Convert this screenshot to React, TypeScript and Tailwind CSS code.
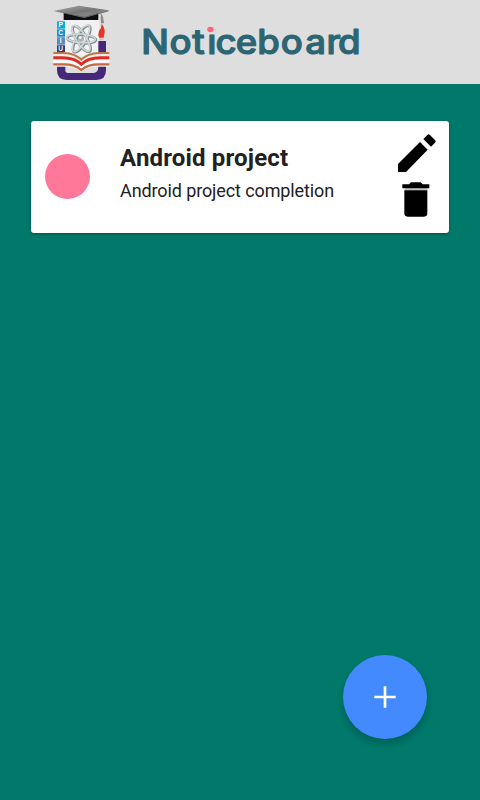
import React from "react";

function CollegeLogo() {
  return (
    <svg className="h-[84px] w-[75px] shrink-0" viewBox="0 0 225 252" aria-hidden="true">
      <defs>
        <linearGradient id="cap" x1="0" x2="1" y1="0" y2="1">
          <stop offset="0" stopColor="#aaa" />
          <stop offset="0.5" stopColor="#777" />
          <stop offset="1" stopColor="#999" />
        </linearGradient>
      </defs>
      <rect x="57" y="56" width="106" height="114" fill="#f1f1f2" />
      <path
        d="M160 123h23v88q0 29-29 29H65q-29 0-29-29v-19h25v19q0 8 8 8h73q18 0 18-18z"
        fill="#452879"
      />
      <path d="M56 38v22h104V38z" fill="#0c0d10" />
      <path d="M26 33 102 17 191 31 118 52z" fill="url(#cap)" />
      <path d="M26 33 118 50 191 31v3l-73 20z" fill="#66676a" />
      <path d="M106 33q47 1 64 10l1 17" fill="none" stroke="#707174" strokeWidth="2" />
      <path d="M168 45q6 0 6 5l3 20h-9l-1-17z" fill="#8b8b8e" />
      <path d="M170 71q10 13 9 25l-3 17-13 1q-6-9 0-23 7-7 7-20z" fill="#e33528" />
      <path d="M163 113h13l-2 8h-10z" fill="#e7b6ad" />
      <g fontFamily="Liberation Sans, sans-serif" fontSize="20" fontWeight="700" fill="white" textAnchor="middle">
        <rect x="36" y="64" width="24" height="22" fill="#0aabe0" />
        <text x="47" y="82">P</text>
        <rect x="36" y="88" width="24" height="22" fill="#138fd0" />
        <text x="47" y="106">C</text>
        <rect x="36" y="112" width="24" height="22" fill="#6585b8" />
        <text x="47" y="130">I</text>
        <rect x="36" y="136" width="24" height="21" fill="#243c7d" />
        <text x="47" y="153">U</text>
      </g>
      <g fill="none">
        <g stroke="#858b8d" strokeWidth="8">
          <ellipse cx="110" cy="117" rx="43" ry="13" transform="rotate(4 110 117)" />
          <ellipse cx="110" cy="117" rx="45" ry="15" transform="rotate(58 110 117)" />
          <ellipse cx="110" cy="117" rx="45" ry="15" transform="rotate(-60 110 117)" />
        </g>
        <g stroke="#cdd6d8" strokeWidth="5">
          <ellipse cx="108" cy="115" rx="43" ry="13" transform="rotate(4 108 115)" />
          <ellipse cx="108" cy="115" rx="45" ry="15" transform="rotate(58 108 115)" />
          <ellipse cx="108" cy="115" rx="45" ry="15" transform="rotate(-60 108 115)" />
        </g>
      </g>
      <circle cx="108" cy="116" r="9" fill="#a9afb1" />
      <circle cx="106" cy="113" r="4" fill="#f4f4f4" />
      <path d="M25 156h31q34 1 53 20 19-19 53-20h31v44h-31q-34 2-53 14-19-12-53-14H25z" fill="#f8eee7" />
      <g fill="none">
        <path d="M25 159h31q34 1 53 20 19-19 53-20h31" stroke="#b77748" strokeWidth="6" />
        <path d="M25 173h27q38 0 57 20 19-20 57-20h27" stroke="#df2b27" strokeWidth="9" />
        <path d="M25 184h27q38 0 57 20 19-20 57-20h27" stroke="#fff" strokeWidth="6" />
        <path d="M25 193h31q34 0 53 17 19-17 53-17h31" stroke="#c26b42" strokeWidth="7" />
      </g>
    </svg>
  );
}

function Wordmark() {
  return (
    <svg className="ml-[10px] h-[50px] w-[240px] shrink-0" viewBox="130 15 240 50" role="img" aria-label="Noticeboard">
      <text
        transform="scale(1.06 1)"
        x="133.3 160 181.4 195.6 203.3 222.5 242.7 264.9 287.9 308.1 318.8"
        y="53.8"
        fontFamily="Inter, sans-serif"
        fontSize="34.5"
        fontWeight="500"
        fill="#2c6573"
        stroke="#2c6573"
        strokeWidth="1.1"
        strokeLinejoin="round"
      >
        Noticeboard
      </text>
      <rect x="206" y="24" width="9" height="10" fill="#dedede" />
      <ellipse cx="210.5" cy="29.5" rx="3.2" ry="2.7" fill="#fb627d" />
    </svg>
  );
}

function PencilIcon() {
  return (
    <svg className="block h-[38px] w-[38px]" viewBox="54 57 114 114" aria-hidden="true">
      <path d="M54 147 120 81 143 104 78 171H54ZM130 72 142 60Q146 56 150 60L165 75Q169 79 165 83L153 95Z" />
    </svg>
  );
}

function TrashIcon() {
  return (
    <svg className="block h-[35px] w-[28px]" viewBox="65 201 84 105" aria-hidden="true">
      <path d="M73 219h68v8H73z" fill="#c5c5c5" />
      <path d="M66 208h20l6-6h29l6 6h20v12H66ZM72 226h69v69q0 10-10 10H82q-10 0-10-10z" />
    </svg>
  );
}

function NoticeCard() {
  return (
    <article className="mx-[31px] mt-[37px] flex h-28 rounded-[3px] bg-white shadow-[0_1px_3px_rgba(0,0,0,0.35)]">
      <div className="ml-[14px] mt-[33px] h-[45px] w-[45px] shrink-0 rounded-full bg-[#ff7899]" />
      <div className="ml-[30px] flex-1 whitespace-nowrap pt-[23px] text-[#212121]">
        <h2 className="text-[24px] leading-7 font-bold tracking-[0.16px]">Android project</h2>
        <p className="mt-2 text-[18px] leading-[22px] tracking-[-0.11px]">Android project completion</p>
      </div>
      <div className="mr-[13px] flex w-[38px] flex-col items-start gap-[10px] pt-[13px]">
        <button aria-label="Edit notice"><PencilIcon /></button>
        <button aria-label="Delete notice" className="ml-1"><TrashIcon /></button>
      </div>
    </article>
  );
}

export default function App() {
  return (
    <div className="flex h-[800px] w-[480px] flex-col overflow-hidden bg-[#00796b] font-[Roboto,sans-serif]">
      <header className="flex h-[84px] shrink-0 items-start bg-[#dedede] pl-[45px]">
        <CollegeLogo />
        <div className="pt-[15px]"><Wordmark /></div>
      </header>
      <main className="flex flex-1 flex-col">
        <NoticeCard />
        <button
          aria-label="Add notice"
          className="mt-auto mr-[53px] mb-[61px] flex h-[84px] w-[84px] items-center justify-center self-end rounded-full bg-[#448aff] shadow-[0_5px_9px_rgba(0,0,0,0.2)]"
        >
          <svg className="h-[22px] w-[22px]" viewBox="0 0 22 22" aria-hidden="true">
            <path d="M11 0.3v21.4M0.3 11h21.4" stroke="white" strokeWidth="2.7" />
          </svg>
        </button>
      </main>
    </div>
  );
}
